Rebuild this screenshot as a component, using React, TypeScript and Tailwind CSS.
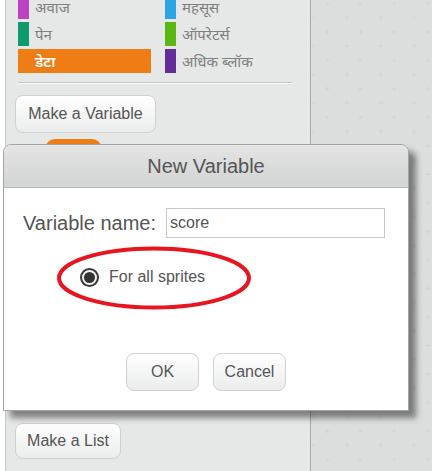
import React from 'react';

const sans = { fontFamily: '"Liberation Sans", Arial, sans-serif' };
const deva = { fontFamily: '"Noto Sans", "Liberation Sans", sans-serif' };

const categories = [
  { left: { name: 'अवाज', color: 'bg-[#bb42c3]' }, right: { name: 'महसूस', color: 'bg-[#2ca5e2]' } },
  { left: { name: 'पेन', color: 'bg-[#0e9a6c]' }, right: { name: 'ऑपरेटर्स', color: 'bg-[#5cb712]' } },
  { left: { name: 'डेटा', color: 'bg-[#ee7d16]', active: true }, right: { name: 'अधिक ब्लॉक', color: 'bg-[#632d99]' } },
];

const Category: React.FC<{ name: string; color: string; active?: boolean }> = ({ name, color, active }) => {
  if (active) {
    return (
      <div className="flex h-[24px] w-[133px] items-center bg-[#ee7d16] pl-[17px] text-[15px] font-semibold text-white" style={deva}>
        {name}
      </div>
    );
  }
  return (
    <div className="flex h-[24px] items-center">
      <span className={`h-full w-[11px] ${color}`}></span>
      <span className="ml-[6px] text-[15px] text-[#808080]" style={deva}>{name}</span>
    </div>
  );
};

const GreyButton: React.FC<{ label: string; className: string }> = ({ label, className }) => (
  <button
    className={`flex items-center justify-center rounded-[8px] border border-[#cfd0d0] bg-gradient-to-b from-white to-[#ebecec] text-[16px] text-[#555] ${className}`}
    style={sans}
  >
    {label}
  </button>
);

const App: React.FC = () => {
  return (
    <div className="relative flex h-[471px] w-[432px] overflow-hidden bg-[#dcdddd]">
      {/* left strip */}
      <div className="h-full w-[6px] border-r border-[#c9cbcb] bg-white"></div>

      {/* palette */}
      <div className="flex h-full w-[305px] flex-col border-r border-[#a9abab] bg-[#e6e7e7] pl-[12px]">
        <div className="mt-[-5px] flex flex-col gap-[3px]">
          {categories.map((row, i) => (
            <div key={i} className="flex">
              <div className="w-[147px]">
                <Category {...row.left} />
              </div>
              <Category {...row.right} />
            </div>
          ))}
        </div>
        <div className="mt-[9px] h-[2px] w-[274px] border-t border-[#c3c4c4] bg-white"></div>
        <GreyButton label="Make a Variable" className="ml-[-3px] mt-[11px] h-[38px] w-[141px]" />
        <div className="ml-[27px] mt-[6px] h-[20px] w-[57px] rounded-t-[10px] bg-[#ee7d16]"></div>
        <GreyButton label="Make a List" className="ml-[-3px] mt-[264px] h-[36px] w-[106px]" />
      </div>

      {/* scripts area */}
      <div className="relative flex-1">
        <svg className="h-full w-full" aria-hidden="true">
          <defs>
            <pattern id="grid" x="0" y="0" width="33.6" height="28.5" patternUnits="userSpaceOnUse">
              <path d="M16 1v5M13.5 3.5h5" stroke="#d2d3d3" strokeWidth="1" />
              <path d="M2.5 15v5M0 17.5h5" stroke="#d2d3d3" strokeWidth="1" />
            </pattern>
          </defs>
          <rect width="100%" height="100%" fill="url(#grid)" />
        </svg>
      </div>

      {/* New Variable dialog */}
      <div className="absolute left-[3px] top-[144px] flex h-[267px] w-[406px] flex-col overflow-hidden rounded-t-[8px] border border-[#a3a5a5] bg-white shadow-[7px_7px_6px_rgba(0,0,0,0.45)]">
        <div className="flex h-[43px] items-center justify-center border-b border-[#b5b6b6] bg-gradient-to-b from-[#e4e4e4] to-[#d3d4d4]">
          <span className="text-[20px] text-[#555]" style={sans}>New Variable</span>
        </div>
        <div className="flex flex-1 flex-col">
          <div className="mt-[20px] flex h-[30px] items-center">
            <span className="ml-[19px] w-[143px] text-[20px] text-[#555]" style={sans}>Variable name:</span>
            <div className="flex h-[30px] w-[219px] items-start border border-[#c8c9c9] bg-white pl-[3px] pt-[2px] text-[16px] text-[#555]" style={sans}>
              score
            </div>
          </div>
          <div className="ml-[76px] mt-[29px] flex h-[20px] items-center">
            <span className="flex h-[19px] w-[19px] items-center justify-center rounded-full border-[2px] border-[#3a3a3a] bg-[#f4f4f4]">
              <span className="h-[11px] w-[11px] rounded-full bg-[#333]"></span>
            </span>
            <span className="ml-[10px] text-[16px] text-[#555]" style={sans}>For all sprites</span>
          </div>
          <div className="ml-[122px] mt-[66px] flex gap-[14px]">
            <GreyButton label="OK" className="h-[38px] w-[73px]" />
            <GreyButton label="Cancel" className="h-[38px] w-[73px]" />
          </div>
        </div>
      </div>

      {/* red annotation ellipse */}
      <svg className="pointer-events-none absolute left-[54px] top-[244px]" width="200" height="68" aria-hidden="true">
        <ellipse cx="100" cy="34" rx="95" ry="29.5" fill="none" stroke="#e8141f" strokeWidth="4" />
      </svg>
    </div>
  );
};

export default App;
